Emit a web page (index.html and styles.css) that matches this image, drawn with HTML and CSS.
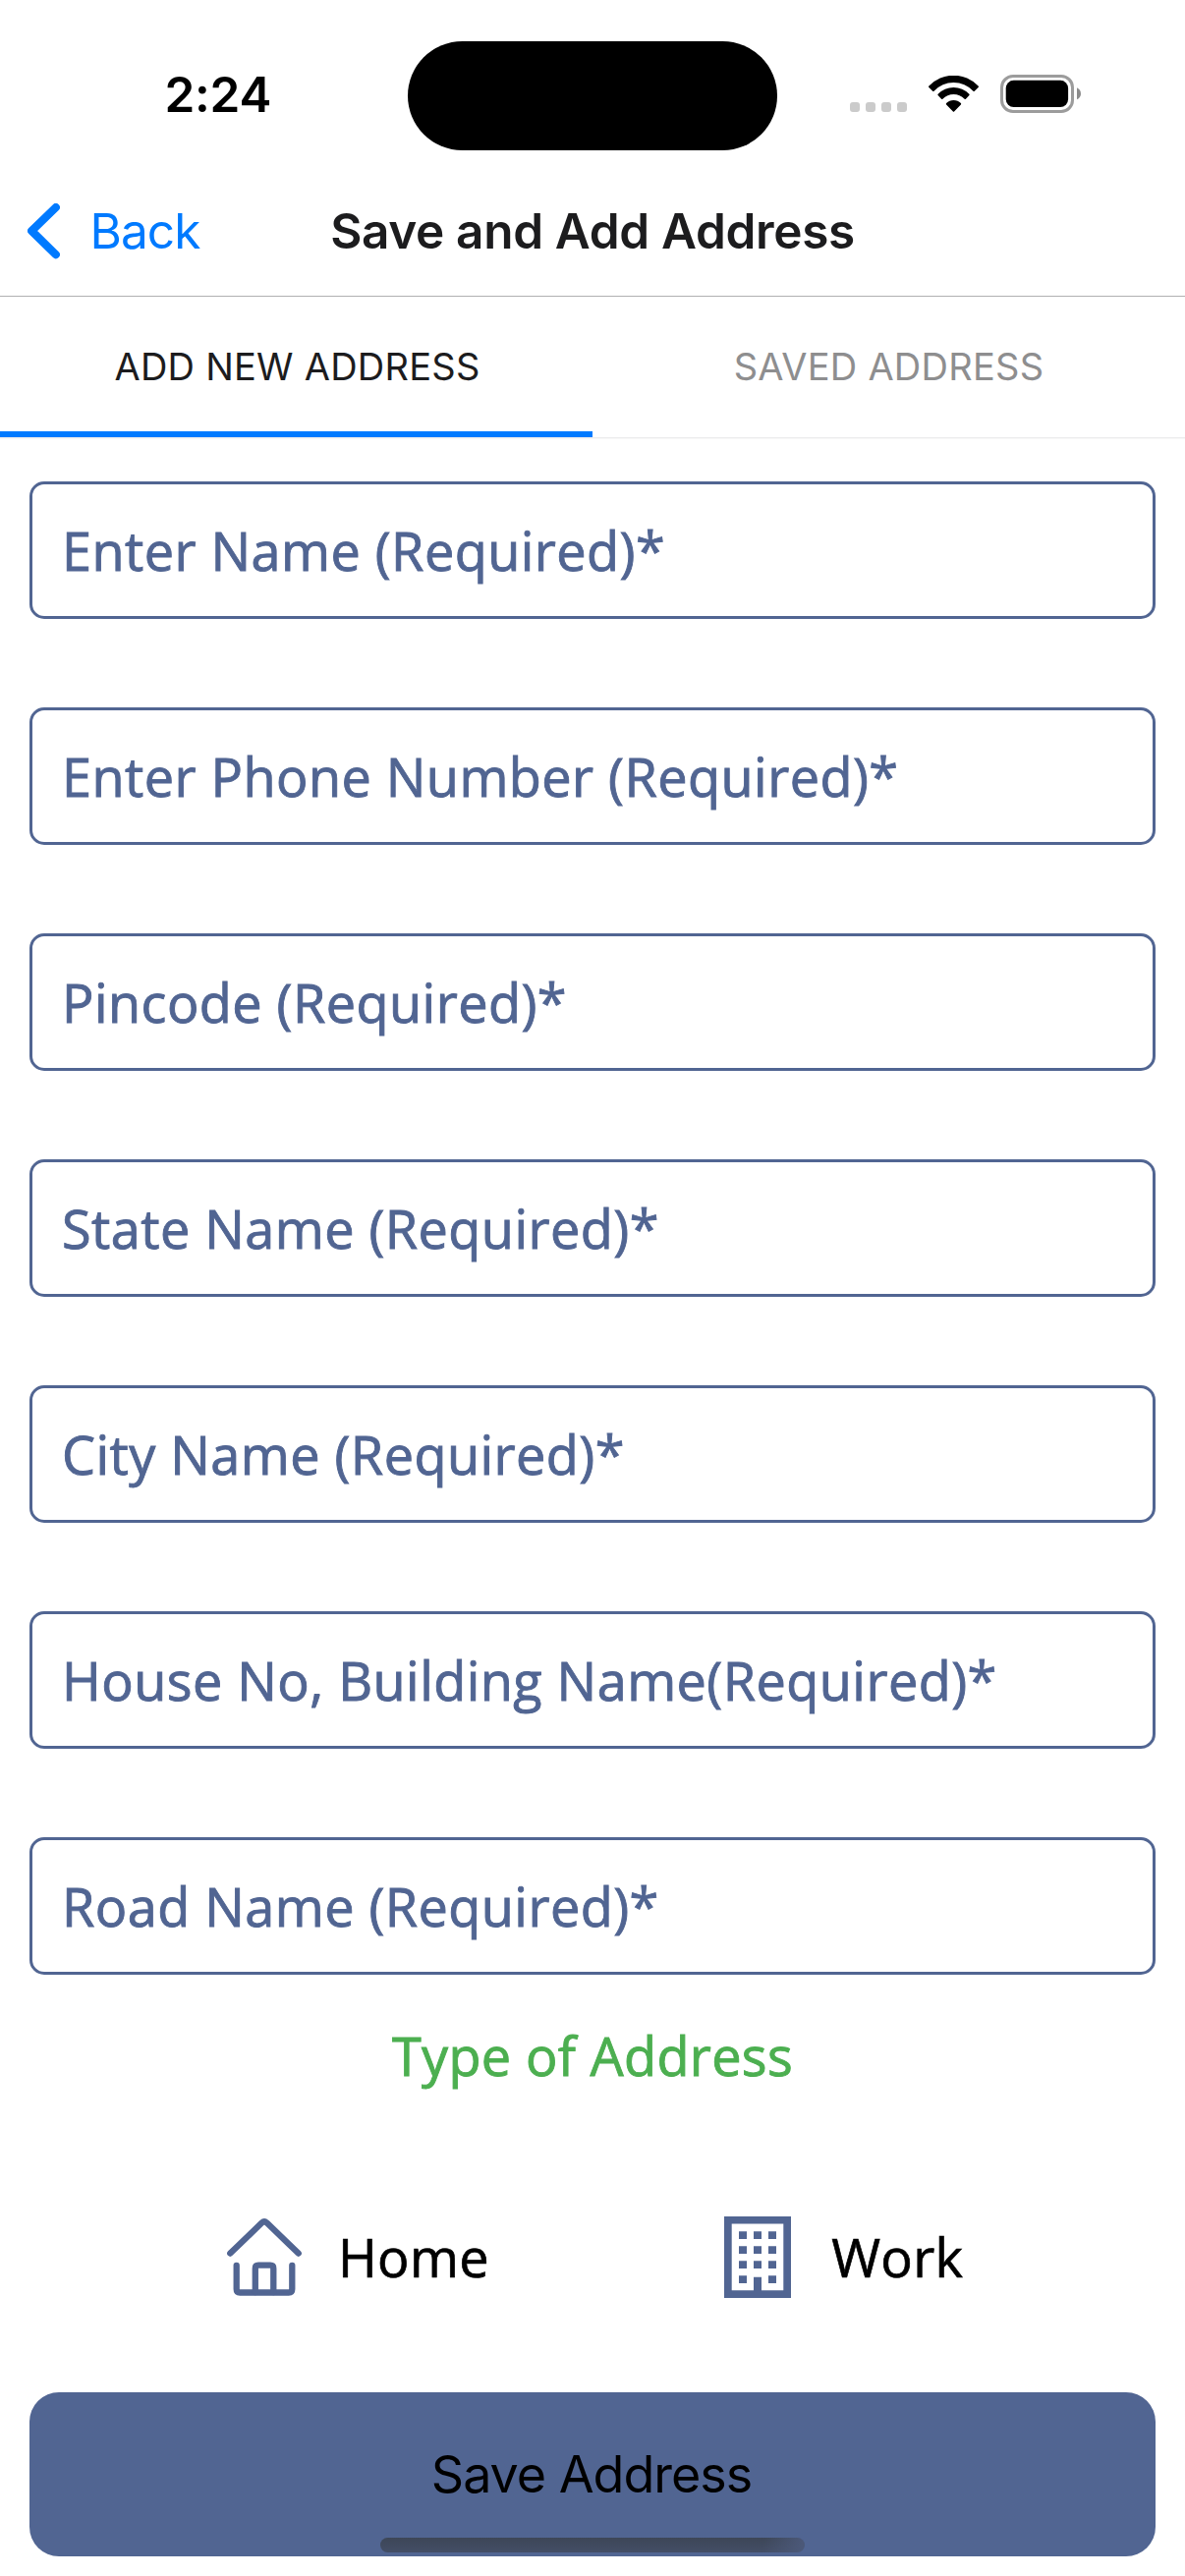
FILE: index.html
```html
<!DOCTYPE html>
<html lang="en">
<head>
<meta charset="utf-8">
<title>Save and Add Address</title>
<link rel="stylesheet" href="styles.css">
</head>
<body>
<div class="screen">
  <div class="status-bar">
    <div class="time">2:24</div>
    <div class="island"></div>
    <div class="signal"><i></i><i></i><i></i><i></i></div>
    <svg class="wifi" width="51" height="37" viewBox="0 0 51 37">
      <path d="M.4 12.1Q-.3 11.3.4 10.6A34.4 34.4 0 0 1 50.6 10.6Q51.3 11.3 50.6 12.1L46.8 15.7Q46.2 16.3 45.5 15.7A27.2 27.2 0 0 0 5.5 15.7Q4.8 16.3 4.2 15.7Z"/>
      <path d="M9.6 20Q9 19.3 9.6 18.7A22.2 22.2 0 0 1 41.4 18.7Q42 19.3 41.4 20L37.9 23.7Q37.3 24.3 36.6 23.7A15.2 15.2 0 0 0 14.4 23.7Q13.7 24.3 13.1 23.7Z"/>
      <path d="M18.1 29.4Q17.5 28.7 18.1 28.1A10.2 10.2 0 0 1 32.9 28.1Q33.5 28.7 32.9 29.4L26.1 36.4Q25.5 37 24.9 36.4Z"/>
    </svg>
    <svg class="battery" width="82" height="39" viewBox="0 0 82 39">
      <rect x="1.5" y="1.5" width="72" height="36" rx="11.5" fill="none" stroke="#9c9c9c" stroke-width="3"/>
      <rect x="5.7" y="5.8" width="63.4" height="27.2" rx="8"/>
      <path d="M78 13.3Q82 15.3 82 19.3Q82 23.3 78 25.3Z" fill="#8c8c8c"/>
    </svg>
  </div>

  <header class="nav-bar">
    <a class="back">
      <svg width="33" height="57" viewBox="0 0 33 57"><path d="M28.8 4.1L4.2 28L28.8 52.2"/></svg>
      <span>Back</span>
    </a>
    <h1 class="title">Save and Add Address</h1>
  </header>

  <nav class="tabs">
    <div class="tab tab-active">ADD NEW ADDRESS</div>
    <div class="tab tab-saved">SAVED ADDRESS</div>
  </nav>

  <main class="form">
    <div class="field">Enter Name (Required)*</div>
    <div class="field">Enter Phone Number (Required)*</div>
    <div class="field">Pincode (Required)*</div>
    <div class="field">State Name (Required)*</div>
    <div class="field">City Name (Required)*</div>
    <div class="field">House No, Building Name(Required)*</div>
    <div class="field">Road Name (Required)*</div>
  </main>

  <h2 class="type-heading">Type of Address</h2>

  <div class="types">
    <div class="type type-home">
      <svg width="76" height="79" viewBox="0 0 76 79">
        <path d="M3.3 35.6L35.4 4.5Q38 2.2 40.6 4.5L72.7 35.6"/>
        <path d="M9.7 47.8V72Q9.7 75.5 13.2 75.5H62.8Q66.3 75.5 66.3 72V47.8"/>
        <path d="M28.8 75V50.9Q28.8 47.7 32 47.7H44.1Q47.3 47.7 47.3 50.9V75"/>
      </svg>
      <span>Home</span>
    </div>
    <div class="type type-work">
      <svg width="68" height="83" viewBox="0 0 68 83">
        <path fill-rule="evenodd" d="M0 0H68V83H0ZM7.7 7.5V75.2H30V61.7H38V75.2H60.3V7.5Z"/>
        <path d="M15 15.3h8v7.8h-8zM30 15.3h8v7.8h-8zM45 15.3h8v7.8h-8zM15 30.3h8v7.8h-8zM30 30.3h8v7.8h-8zM45 30.3h8v7.8h-8zM15 45.3h8v7.8h-8zM30 45.3h8v7.8h-8zM45 45.3h8v7.8h-8zM15 60.3h8v7.8h-8zM45 60.3h8v7.8h-8z"/>
      </svg>
      <span>Work</span>
    </div>
  </div>

  <button class="save" type="button">Save Address</button>
  <div class="home-indicator"></div>
</div>
</body>
</html>
```
FILE: styles.css
```css
* {
  box-sizing: border-box;
}

body {
  margin: 0;
  background: #fff;
  font-family: Inter, "Liberation Sans", sans-serif;
}

.screen {
  position: relative;
  display: flex;
  flex-direction: column;
  width: 1206px;
  height: 2622px;
  overflow: hidden;
}

/* Status bar */
.status-bar {
  display: flex;
  align-items: flex-start;
  height: 169px;
  padding-left: 167.4px;
}

.time {
  width: 247.6px;
  margin-top: 65.5px;
  font-size: 49.5px;
  font-weight: 600;
  line-height: 60px;
  letter-spacing: -0.2px;
}

.island {
  width: 376.5px;
  height: 111px;
  margin-top: 41.5px;
  border-radius: 56px;
  background: #000;
}

.signal {
  display: flex;
  gap: 6px;
  margin: 104px 0 0 73.5px;
}

.signal i {
  width: 10px;
  height: 10px;
  border-radius: 3px;
  background: #cbcbcb;
}

.wifi {
  margin: 77px 0 0 22px;
}

.battery {
  margin: 76px 0 0 22px;
}

/* Navigation bar */
.nav-bar {
  display: grid;
  grid-template-columns: 310px 1fr 310px;
  align-items: center;
  height: 133px;
  border-bottom: 1px solid #b0b0b2;
}

.back {
  display: flex;
  align-items: center;
  gap: 30.4px;
  padding-left: 28px;
  color: #007aff;
  font-size: 49.5px;
  line-height: 60px;
  letter-spacing: -0.9px;
}

.back path {
  fill: none;
  stroke: #007aff;
  stroke-width: 8.2;
  stroke-linecap: round;
  stroke-linejoin: round;
}

.title {
  margin: 0;
  color: #1c1c1e;
  font-size: 49.5px;
  font-weight: 600;
  line-height: 60px;
  letter-spacing: -0.34px;
  text-align: center;
  white-space: nowrap;
}

/* Tabs */
.tabs {
  display: grid;
  grid-template-columns: 1fr 1fr;
  height: 143px;
  box-shadow: 0 1px 0 #ececed, 0 2px 0 #f7f7f7;
}

.tab {
  padding-top: 6px;
  border-bottom: 6px solid transparent;
  font-size: 38px;
  line-height: 131px;
  text-align: center;
}

.tab-active {
  padding-left: 2px;
  border-color: #007aff;
  color: #1c1c1e;
  letter-spacing: 0.24px;
}

.tab-saved {
  color: #8e8e8f;
  letter-spacing: 0.25px;
}

/* Address form */
.form {
  display: flex;
  flex-direction: column;
  gap: 90px;
  padding: 45px 30px 0;
}

.field {
  height: 140px;
  padding-left: 30px;
  border: 3px solid #516592;
  border-radius: 15px;
  color: #516592;
  font: 54px/134px "Open Sans", "Noto Sans", sans-serif;
  letter-spacing: 0.45px;
  -webkit-text-stroke: 0.9px currentColor;
}

.type-heading {
  margin: 42px 0 0;
  color: #4caf50;
  font: 400 54px/80px "Open Sans", "Noto Sans", sans-serif;
  letter-spacing: 0.33px;
  text-align: center;
  -webkit-text-stroke: 0.9px currentColor;
}

.types {
  display: grid;
  grid-template-columns: 1fr 1fr;
  height: 90px;
  margin-top: 120px;
}

.type {
  display: flex;
  align-items: center;
  color: #000;
  font: 54px/90px "Open Sans", "Noto Sans", sans-serif;
  letter-spacing: 0.3px;
  -webkit-text-stroke: 0.7px currentColor;
}

.type-home {
  gap: 37px;
  padding-left: 231px;
}

.type-home svg {
  fill: none;
  stroke: #516592;
  stroke-width: 6.3;
  stroke-linecap: round;
  stroke-linejoin: round;
}

.type-work {
  gap: 41.2px;
  padding-left: 134px;
}

.type-work svg {
  fill: #516592;
}

.save {
  height: 167px;
  margin: 93px 30px 0;
  padding: 0 2px 0 0;
  border: 0;
  border-radius: 30px;
  background: #516592;
  color: #000;
  font: 400 52px/167px Inter, "Liberation Sans", sans-serif;
  letter-spacing: -1px;
}

/* System indicator lying over the button */
.home-indicator {
  position: absolute;
  left: 387px;
  bottom: 24px;
  width: 432px;
  height: 15px;
  border-radius: 8px;
  background:
    linear-gradient(100deg, transparent 90%, #4b5878 99%),
    linear-gradient(#3d4657, #434e66);
}
```
